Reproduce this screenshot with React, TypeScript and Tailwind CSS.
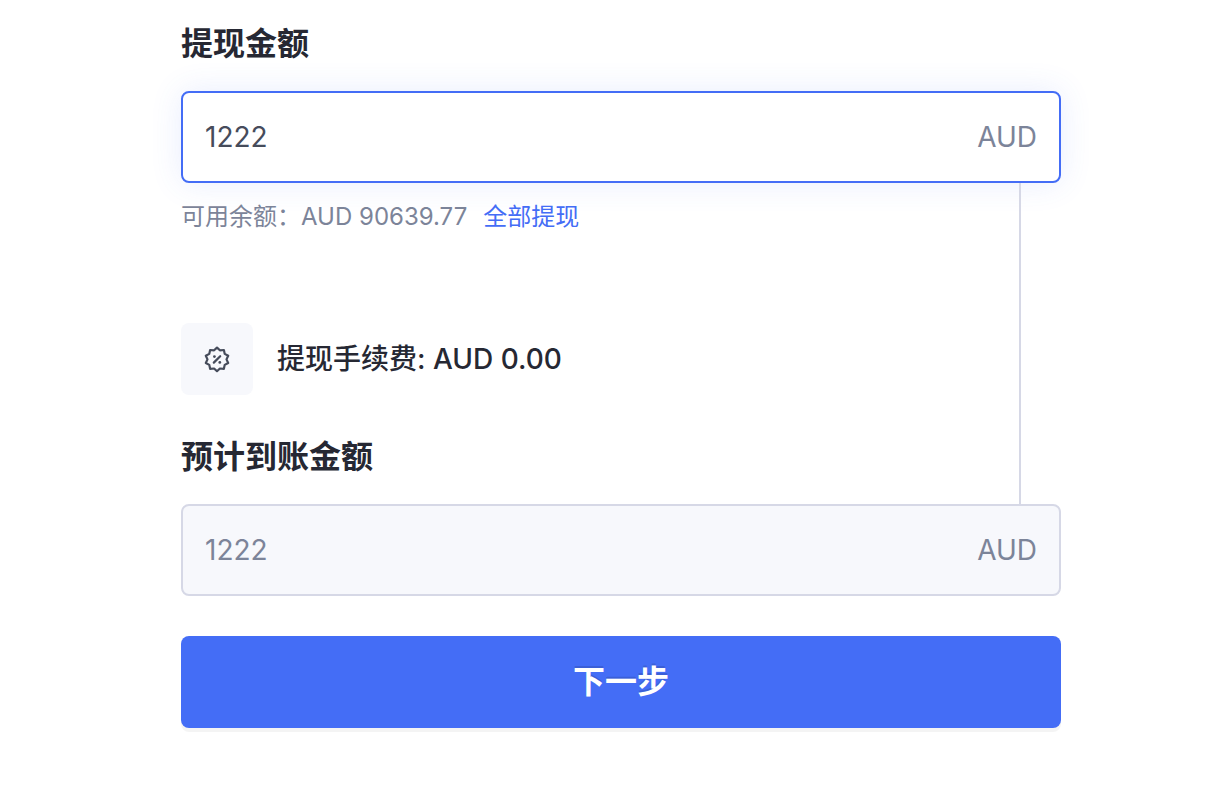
import { useState } from "react";

const BALANCE = "90639.77";

const FeeIcon = () => (
  <svg
    className="h-7 w-7 text-[#464c5b]"
    viewBox="0 0 28 28"
    fill="none"
    stroke="currentColor"
    strokeWidth={2.2}
    strokeLinejoin="round"
    strokeLinecap="round"
    aria-hidden="true"
  >
    <path d="M14 2.6L16.9 5.3L20.9 5L21.7 8.9L25.2 10.8L23.5 14.4L25.2 18L21.7 19.9L20.9 23.8L16.9 23.5L14 26.2L11.1 23.5L7.1 23.8L6.3 19.9L2.8 18L4.5 14.4L2.8 10.8L6.3 8.9L7.1 5L11.1 5.3Z" />
    <path d="M10.8 17.6l6.400-6.400" />
    <circle cx="11.4" cy="11.600" r="1.4" fill="currentColor" stroke="none" />
    <circle cx="16.8" cy="17.400" r="1.4" fill="currentColor" stroke="none" />
  </svg>
);

const App = () => {
  const [amount, setAmount] = useState("1222");

  return (
    <main className="bg-white pt-5 pr-[163px] pb-20 pl-[181px] font-['Inter','Noto_Sans_CJK_SC',sans-serif] text-[#262833]">
      <form onSubmit={(e) => e.preventDefault()}>
        {/* 提现金额 */}
        <label htmlFor="amount" className="block text-[32px] leading-12 font-bold">
          提现金额
        </label>
        <div className="mt-[23px] flex h-[92px] items-center rounded-lg border-2 border-[#446df6] bg-white px-[22px] text-[28px] shadow-[0_0_32px_rgba(68,109,246,0.12)]">
          <input
            id="amount"
            value={amount}
            onChange={(e) => setAmount(e.target.value)}
            className="min-w-0 flex-1 bg-transparent text-[#464c5b] outline-none"
          />
          <span className="text-[#7c8499]">AUD</span>
        </div>

        <div className="mr-10 border-r-2 border-[#d6d8e6] pt-4 pb-[23px]">
          <div className="flex items-center text-2xl leading-9">
            <p className="text-[#7c8499]">可用余额：AUD {BALANCE}</p>
            <button
              type="button"
              onClick={() => setAmount(BALANCE)}
              className="ml-4 cursor-pointer text-[#446df6]"
            >
              全部提现
            </button>
          </div>

          {/* 手续费 */}
          <div className="mt-22 flex items-center gap-6">
            <div className="flex h-18 w-18 items-center justify-center rounded-lg bg-[#f7f8fc]">
              <FeeIcon />
            </div>
            <p className="text-[28px] leading-10 font-medium">提现手续费: AUD 0.00</p>
          </div>

          <label htmlFor="received" className="mt-[38px] block text-[32px] leading-12 font-bold">
            预计到账金额
          </label>
        </div>

        <div className="flex h-[92px] items-center rounded-lg border-2 border-[#d6d8e6] bg-[#f7f8fc] px-[22px] text-[28px] text-[#7c8499]">
          <input
            id="received"
            value={amount}
            disabled
            className="min-w-0 flex-1 bg-transparent outline-none"
          />
          <span>AUD</span>
        </div>

        <button
          type="submit"
          className="mt-10 h-[92px] w-full cursor-pointer rounded-lg bg-[#446df6] text-[32px] font-bold text-white shadow-[0_4px_0_rgba(0,0,0,0.045)] [text-shadow:0_-2px_0_rgba(0,0,0,0.12)]"
        >
          下一步
        </button>
      </form>
    </main>
  );
};

export default App;
